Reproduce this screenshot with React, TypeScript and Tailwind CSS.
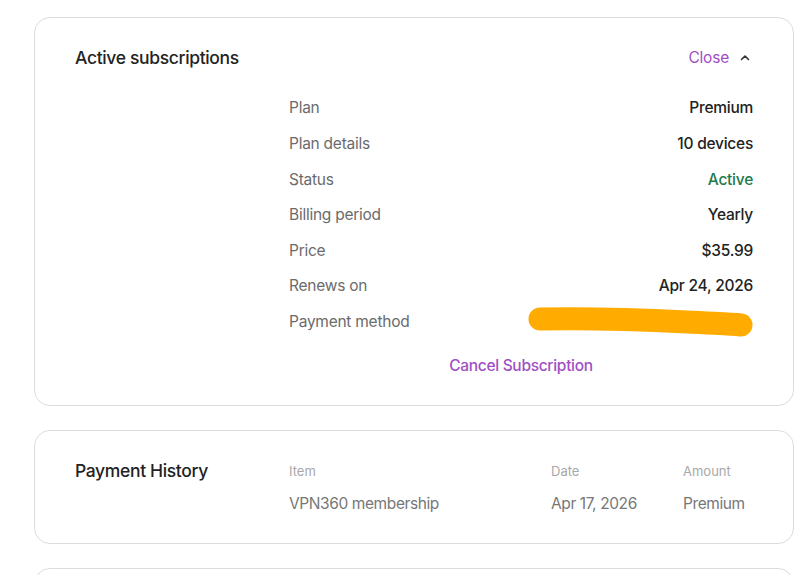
import React from 'react';

const rows: { label: string; value: string; tone?: 'green' | 'hidden' }[] = [
    { label: 'Plan', value: 'Premium' },
    { label: 'Plan details', value: '10 devices' },
    { label: 'Status', value: 'Active', tone: 'green' },
    { label: 'Billing period', value: 'Yearly' },
    { label: 'Price', value: '$35.99' },
    { label: 'Renews on', value: 'Apr 24, 2026' },
    { label: 'Payment method', value: '', tone: 'hidden' },
];

function Redacted() {
    return (
        <svg width="228" height="34" viewBox="0 0 228 34" className="block">
            <path
                d="M13 14 C 60 13, 120 15, 160 17 S 205 19, 214 20"
                stroke="#ffab00"
                strokeWidth="23"
                strokeLinecap="round"
                fill="none"
            />
        </svg>
    );
}

function ChevronUp() {
    return (
        <svg width="12" height="12" viewBox="0 0 12 12" fill="none" className="block">
            <path d="M2.5 7.5 L6 4 L9.5 7.5" stroke="#333" strokeWidth="1.6" strokeLinecap="round" strokeLinejoin="round" />
        </svg>
    );
}

export default function App() {
    return (
        <div className="min-h-screen bg-white pl-[34px] pr-[3px] pt-[17px] font-['Inter',sans-serif] text-[#222]">
            {/* Active subscriptions */}
            <div className="rounded-2xl border border-[#dcdcdc] px-[40px] pt-[26px] pb-[27px]">
                <div className="flex h-7 items-center justify-between">
                    <h2 className="text-[17.5px] font-medium tracking-[-0.35px]">Active subscriptions</h2>
                    <button className="flex items-center gap-[10px] pr-[2px] text-[15.5px] tracking-[-0.2px] text-[#a04fc4]">
                        Close
                        <ChevronUp />
                    </button>
                </div>

                <div className="ml-[214px] mt-[18px]">
                    {rows.map((r) => (
                        <div key={r.label} className="flex h-[35.67px] items-center justify-between text-[15.5px] tracking-[-0.25px]">
                            <span className="text-[#6b6b6b]">{r.label}</span>
                            {r.tone === 'hidden' ? (
                                <span className="-mr-[2px]"><Redacted /></span>
                            ) : (
                                <span className={`font-medium ${r.tone === 'green' ? 'text-[#1f7a4d]' : 'text-[#222]'}`}>
                                    {r.value}
                                </span>
                            )}
                        </div>
                    ))}
                    <div className="mt-[13px] text-center">
                        <button className="text-[15.5px] font-medium leading-6 tracking-[-0.3px] text-[#a04fc4]">Cancel Subscription</button>
                    </div>
                </div>
            </div>

            {/* Payment history */}
            <div className="mt-[24px] rounded-2xl border border-[#dcdcdc] px-[40px] pt-[27px] pb-[27px]">
                <div className="grid grid-cols-[214px_262px_132px_1fr]">
                    <h2 className="flex h-7 items-center text-[17.5px] font-medium tracking-[-0.35px]">Payment History</h2>
                    <span className="flex h-7 items-center text-[13px] text-[#a8a8a8]">Item</span>
                    <span className="flex h-7 items-center text-[13px] text-[#a8a8a8]">Date</span>
                    <span className="flex h-7 items-center text-[13px] text-[#a8a8a8]">Amount</span>
                    <span />
                    <span className="mt-[6px] text-[15.5px] leading-6 tracking-[-0.4px] text-[#777]">VPN360 membership</span>
                    <span className="mt-[6px] text-[15.5px] leading-6 tracking-[-0.4px] text-[#777]">Apr 17, 2026</span>
                    <span className="mt-[6px] text-[15.5px] leading-6 tracking-[-0.4px] text-[#777]">Premium</span>
                </div>
            </div>

            <div className="mt-[24px] h-[60px] rounded-2xl border border-[#dcdcdc]" />
        </div>
    );
}
